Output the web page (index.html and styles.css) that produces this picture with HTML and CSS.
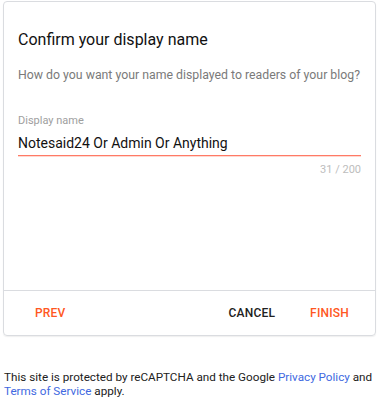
FILE: index.html
```html
<!DOCTYPE html>
<html>
<head>
<meta charset="utf-8">
<link rel="stylesheet" href="styles.css">
</head>
<body>
<div class="card">
  <div class="content">
    <h1 class="title">Confirm your display name</h1>
    <p class="subtitle">How do you want your name displayed to readers of your blog?</p>
    <div class="field">
      <label class="label">Display name</label>
      <div class="input">Notesaid24 Or Admin Or Anything</div>
      <div class="underline"></div>
      <div class="counter">31 / 200</div>
    </div>
  </div>
  <div class="actions">
    <span class="btn accent">PREV</span>
    <span class="spacer"></span>
    <span class="btn">CANCEL</span>
    <span class="btn accent">FINISH</span>
  </div>
</div>
<p class="footer">This site is protected by reCAPTCHA and the Google <a href="#">Privacy Policy</a> and <a href="#">Terms of Service</a> apply.</p>
</body>
</html>
```

FILE: styles.css
```css
* { box-sizing: border-box; }
html, body { margin: 0; padding: 0; background: #fff; }
body {
  font-family: Roboto, "Noto Sans", Arial, sans-serif;
  color: #202124;
  width: 379px;
  padding: 1px 3px 0 3px;
}
.card {
  border: 1px solid #dadce0;
  border-radius: 4px;
  height: 335px;
  display: flex;
  flex-direction: column;
  box-shadow: 0 1px 1px rgba(60,64,67,0.08);
}
.content {
  flex: 1;
  padding: 27px 14px 0 14px;
}
.title {
  margin: 0;
  font-size: 16px;
  font-weight: 400;
  line-height: 22px;
  color: #111;
}
.subtitle {
  margin: 15px 0 0 0;
  font-size: 12.3px;
  line-height: 18px;
  color: #7a7a7a;
  white-space: nowrap;
}
.field { margin-top: 30px; }
.label {
  display: block;
  font-size: 11px;
  line-height: 14px;
  color: #9e9e9e;
}
.input {
  margin-top: 5px;
  font-size: 14px;
  line-height: 20px;
  color: #111;
  padding-bottom: 2px;
}
.underline {
  height: 2px;
  background: linear-gradient(#ff7a66 50%, #ffd8d0 50%);
}
.counter {
  text-align: right;
  font-size: 11px;
  line-height: 14px;
  color: #bdbdbd;
  margin-top: 6px;
}
.actions {
  border-top: 1px solid #dadce0;
  height: 45px;
  display: flex;
  align-items: center;
  padding: 0 26px 0 31px;
}
.spacer { flex: 1; }
.btn {
  font-size: 12px;
  font-weight: 500;
  color: #212121;
  letter-spacing: 0.2px;
}
.btn + .btn { margin-left: 35px; }
.accent { color: #ff5722; }
.footer {
  margin: 34px 0 0 1px;
  font-size: 11.7px;
  line-height: 14px;
  color: #212121;
}
.footer a { color: #4169e1; text-decoration: none; }
```
